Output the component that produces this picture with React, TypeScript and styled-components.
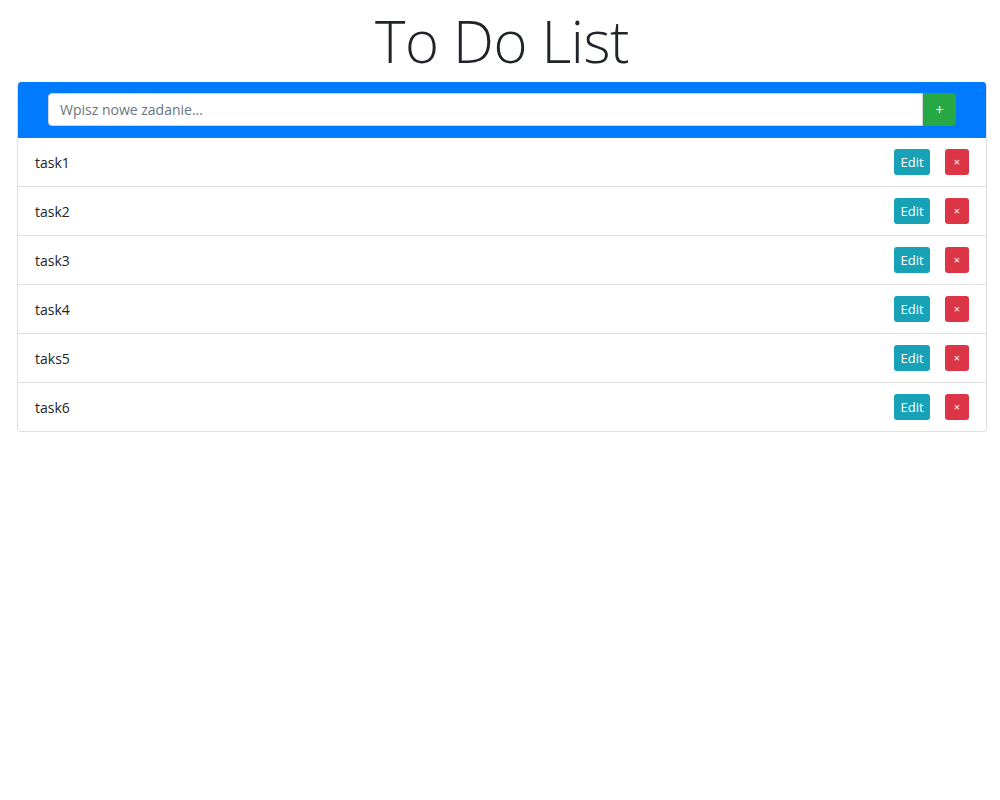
import React from "react";
import styled, { createGlobalStyle } from "styled-components";

const Global = createGlobalStyle`
  html, body { margin: 0; padding: 0; background: #fff; }
  body { font-family: "Open Sans", "Noto Sans", Arial, sans-serif; color: #212529; }
  * { box-sizing: border-box; }
`;

const Page = styled.div`
  padding: 0 13px 0 17px;
  display: flex;
  flex-direction: column;
`;

const Title = styled.h1`
  margin: 0;
  height: 82px;
  display: flex;
  align-items: center;
  justify-content: center;
  font-family: "Open Sans", "Noto Sans", sans-serif;
  font-weight: 300;
  font-size: 58px;
  letter-spacing: -0.5px;
  color: #212529;
  padding-bottom: 2px;
`;

const Card = styled.div`
  border: 1px solid rgba(0, 0, 0, 0.125);
  border-top: none;
  border-radius: 4px;
  overflow: hidden;
  width: 970px;
`;

const Header = styled.form`
  background: #007bff;
  height: 56px;
  padding: 11px 31px 0 31px;
  display: flex;
  margin: 0 -1px;
`;

const Input = styled.input`
  flex: 1;
  height: 33px;
  border: 1px solid #ced4da;
  border-radius: 4px 0 0 4px;
  padding: 0 11px;
  font-family: "Open Sans", "Noto Sans", sans-serif;
  font-size: 14px;
  color: #495057;
  &::placeholder { color: #6c757d; }
`;

const AddButton = styled.button`
  width: 33px;
  height: 33px;
  border: none;
  background: #28a745;
  color: #fff;
  border-radius: 0 4px 4px 0;
  font-size: 14px;
  font-family: "Open Sans", sans-serif;
  padding: 0;
`;

const Row = styled.div`
  height: 49px;
  display: flex;
  align-items: center;
  padding: 0 17px 0 17px;
  border-top: 1px solid rgba(0, 0, 0, 0.125);
  font-size: 14px;
  &:first-of-type { border-top: none; height: 48px; }
`;

const TaskName = styled.span`
  flex: 1;
  font-family: "Open Sans", "Noto Sans", sans-serif;
  font-size: 14px;
  color: #212529;
`;

const SmallBtn = styled.button<{ $variant: "info" | "danger" }>`
  height: 26px;
  padding: 0;
  width: ${(p) => (p.$variant === "info" ? "36px" : "24px")};
  margin-left: ${(p) => (p.$variant === "danger" ? "15px" : "0")};
  border: none;
  border-radius: 3px;
  color: #fff;
  background: ${(p) => (p.$variant === "info" ? "#17a2b8" : "#dc3545")};
  font-family: "Open Sans", "Noto Sans", sans-serif;
  font-size: ${(p) => (p.$variant === "info" ? "13px" : "11px")};
  line-height: 26px;
`;

const tasks = ["task1", "task2", "task3", "task4", "taks5", "task6"];

export default function App() {
  return (
    <>
      <Global />
      <Page>
        <Title>To Do List</Title>
        <Card>
          <Header onSubmit={(e) => e.preventDefault()}>
            <Input placeholder="Wpisz nowe zadanie..." />
            <AddButton type="submit">+</AddButton>
          </Header>
          <div>
            {tasks.map((t) => (
              <Row key={t}>
                <TaskName>{t}</TaskName>
                <SmallBtn $variant="info">Edit</SmallBtn>
                <SmallBtn $variant="danger">×</SmallBtn>
              </Row>
            ))}
          </div>
        </Card>
      </Page>
    </>
  );
}
